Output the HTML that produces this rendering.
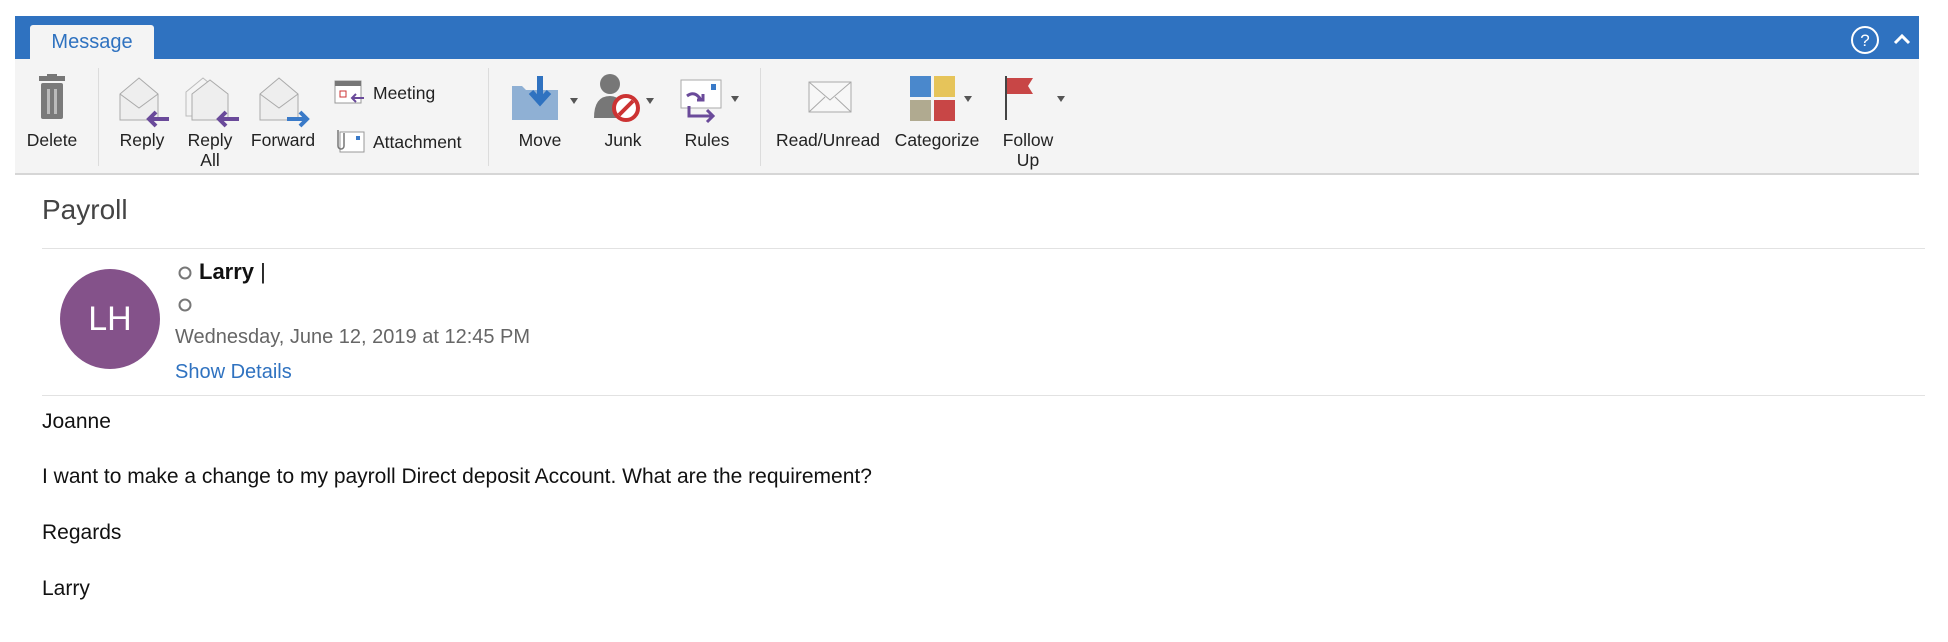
<!DOCTYPE html>
<html><head><style>
body{margin:0;width:1948px;height:642px;background:#fff;font-family:"Liberation Sans",sans-serif;position:relative;overflow:hidden}
.a{position:absolute}
.bar{left:15px;top:16px;width:1904px;height:43px;background:#2f72c0}
.tab{left:30px;top:25px;width:124px;height:34px;background:#f4f4f4;border-radius:3px 3px 0 0;color:#2f72c0;font-size:20px;text-align:center;line-height:34px}
.rib{left:15px;top:59px;width:1904px;height:114px;background:#f4f4f4;border-bottom:2px solid #d6d6d6}
.lbl{position:absolute;font-size:17.5px;color:#222;text-align:center;line-height:20px;transform:translateX(-50%);white-space:nowrap;top:130px}
.sep{position:absolute;top:68px;width:1px;height:98px;background:#dcdcdc}
.body{font-size:21px;color:#111;left:42px}
</style></head><body>
<div class="a bar"></div>
<div class="a tab">Message</div>
<svg class="a" style="left:1850px;top:25px" width="30" height="30"><circle cx="15" cy="15" r="13" fill="none" stroke="#fff" stroke-width="2"/><text x="15" y="21" fill="#fff" font-size="17" text-anchor="middle" font-family="Liberation Sans">?</text></svg>
<svg class="a" style="left:1893px;top:32px" width="18" height="14"><path d="M2 11 L9 4 L16 11" fill="none" stroke="#fff" stroke-width="3"/></svg>
<div class="a rib"></div>
<div class="sep" style="left:98px"></div><div class="sep" style="left:488px"></div><div class="sep" style="left:760px"></div>
<svg class="a" style="left:34px;top:74px" width="36" height="48"><rect x="5" y="2" width="26" height="5" fill="#777"/><rect x="13" y="0" width="10" height="4" fill="#777"/><rect x="7" y="9" width="22" height="36" rx="2" fill="#7a7a7a"/><rect x="13" y="15" width="3" height="25" fill="#bbb"/><rect x="20" y="15" width="3" height="25" fill="#bbb"/></svg>
<svg class="a" style="left:117px;top:74px" width="56" height="56"><path d="M3 20 L22 4 L41 20 V46 H3Z" fill="#eee" stroke="#aaa"/><path d="M3 20 L22 34 L41 20" fill="none" stroke="#aaa"/><path d="M52 45 H32 M39 38 L32 45 L39 52" stroke="#6a4a9a" stroke-width="4" fill="none"/></svg>
<svg class="a" style="left:183px;top:74px" width="60" height="56"><path d="M3 18 L20 4 L37 18 V42 H3Z" fill="#f4f4f4" stroke="#bbb"/><path d="M9 20 L27 6 L45 20 V46 H9Z" fill="#eee" stroke="#aaa"/><path d="M56 45 H36 M43 38 L36 45 L43 52" stroke="#6a4a9a" stroke-width="4" fill="none"/></svg>
<svg class="a" style="left:257px;top:74px" width="56" height="56"><path d="M3 20 L22 4 L41 20 V46 H3Z" fill="#eee" stroke="#aaa"/><path d="M3 20 L22 34 L41 20" fill="none" stroke="#aaa"/><path d="M30 45 H50 M43 38 L50 45 L43 52" stroke="#3a7ac8" stroke-width="4" fill="none"/></svg>
<svg class="a" style="left:334px;top:80px" width="32" height="28"><rect x="1" y="1" width="26" height="22" fill="#fff" stroke="#999"/><rect x="1" y="1" width="26" height="5" fill="#777"/><rect x="6" y="11" width="6" height="6" fill="none" stroke="#c33"/><path d="M30 18 H18 M22 14 L18 18 L22 22" stroke="#6a4a9a" stroke-width="2" fill="none"/></svg>
<div class="a" style="left:373px;top:83px;font-size:17.5px;color:#222">Meeting</div>
<svg class="a" style="left:334px;top:128px" width="32" height="28"><rect x="6" y="4" width="24" height="20" fill="#fff" stroke="#999"/><rect x="22" y="8" width="4" height="4" fill="#3a7ac8"/><path d="M4 2 V18 a3 3 0 0 0 6 0 V5" fill="none" stroke="#777" stroke-width="1.5"/></svg>
<div class="a" style="left:373px;top:132px;font-size:17.5px;color:#222">Attachment</div>
<svg class="a" style="left:510px;top:74px" width="70" height="50"><path d="M2 12 H12 L16 16 H48 V46 H2Z" fill="#8fb0d4"/><path d="M30 2 V26 M21 18 L30 28 L39 18" stroke="#2f72c0" stroke-width="6" fill="none"/><path d="M60 24 L68 24 L64 30Z" fill="#555"/></svg>
<svg class="a" style="left:592px;top:72px" width="70" height="52"><circle cx="18" cy="12" r="10" fill="#777"/><path d="M2 46 Q2 24 18 24 Q32 24 32 46Z" fill="#777"/><circle cx="34" cy="36" r="12" fill="#fff" stroke="#c33" stroke-width="4"/><path d="M27 43 L41 29" stroke="#c33" stroke-width="4"/><path d="M54 26 L62 26 L58 32Z" fill="#555"/></svg>
<svg class="a" style="left:679px;top:78px" width="70" height="50"><rect x="2" y="2" width="40" height="28" fill="#fff" stroke="#aaa"/><rect x="32" y="6" width="5" height="6" fill="#3a7ac8"/><path d="M8 18 Q16 12 22 22 M18 22 H24 V16" stroke="#6a4a9a" stroke-width="3" fill="none"/><path d="M10 28 V38 H34 M28 32 L34 38 L28 44" stroke="#6a4a9a" stroke-width="3" fill="none"/><path d="M52 18 L60 18 L56 24Z" fill="#555"/></svg>
<svg class="a" style="left:807px;top:80px" width="46" height="36"><rect x="2" y="2" width="42" height="30" fill="#f7f7f7" stroke="#aaa"/><path d="M2 2 L23 20 L44 2 M2 32 L18 17 M44 32 L28 17" fill="none" stroke="#aaa"/></svg>
<svg class="a" style="left:910px;top:76px" width="66" height="50"><rect x="0" y="0" width="21" height="21" fill="#4a88cc"/><rect x="24" y="0" width="21" height="21" fill="#e6c45a"/><rect x="0" y="24" width="21" height="21" fill="#b0aa90"/><rect x="24" y="24" width="21" height="21" fill="#c84646"/><path d="M54 20 L62 20 L58 26Z" fill="#555"/></svg>
<svg class="a" style="left:1003px;top:76px" width="66" height="50"><path d="M3 0 V44" stroke="#444" stroke-width="2"/><path d="M4 2 H30 L25 10 L30 18 H4Z" fill="#c84646"/><path d="M54 20 L62 20 L58 26Z" fill="#555"/></svg>
<div class="lbl" style="left:52px">Delete</div>
<div class="lbl" style="left:142px">Reply</div>
<div class="lbl" style="left:210px">Reply<br>All</div>
<div class="lbl" style="left:283px">Forward</div>
<div class="lbl" style="left:540px">Move</div>
<div class="lbl" style="left:623px">Junk</div>
<div class="lbl" style="left:707px">Rules</div>
<div class="lbl" style="left:828px">Read/Unread</div>
<div class="lbl" style="left:937px">Categorize</div>
<div class="lbl" style="left:1028px">Follow<br>Up</div>
<div class="a" style="left:42px;top:194px;font-size:28px;color:#444">Payroll</div>
<div class="a" style="left:42px;top:248px;width:1883px;height:1px;background:#e2e2e2"></div>
<div class="a" style="left:60px;top:269px;width:100px;height:100px;border-radius:50%;background:#84528a;color:#fff;font-size:34px;text-align:center;line-height:100px">LH</div>
<svg class="a" style="left:177px;top:265px" width="16" height="60"><circle cx="8" cy="8" r="5.5" fill="none" stroke="#777" stroke-width="2"/><circle cx="8" cy="40" r="5.5" fill="none" stroke="#777" stroke-width="2"/></svg>
<div class="a" style="left:199px;top:259px;font-size:22px;font-weight:bold;color:#111">Larry <span style="font-weight:normal">|</span></div>
<div class="a" style="left:175px;top:326px;font-size:20px;color:#666">Wednesday, June 12, 2019 at 12:45 PM</div>
<div class="a" style="left:175px;top:361px;font-size:20px;color:#2f72c0">Show Details</div>
<div class="a" style="left:42px;top:395px;width:1883px;height:1px;background:#e2e2e2"></div>
<div class="a body" style="top:410px">Joanne</div>
<div class="a body" style="top:465px">I want to make a change to my payroll Direct deposit Account. What are the requirement?</div>
<div class="a body" style="top:521px">Regards</div>
<div class="a body" style="top:577px">Larry</div>
</body></html>
